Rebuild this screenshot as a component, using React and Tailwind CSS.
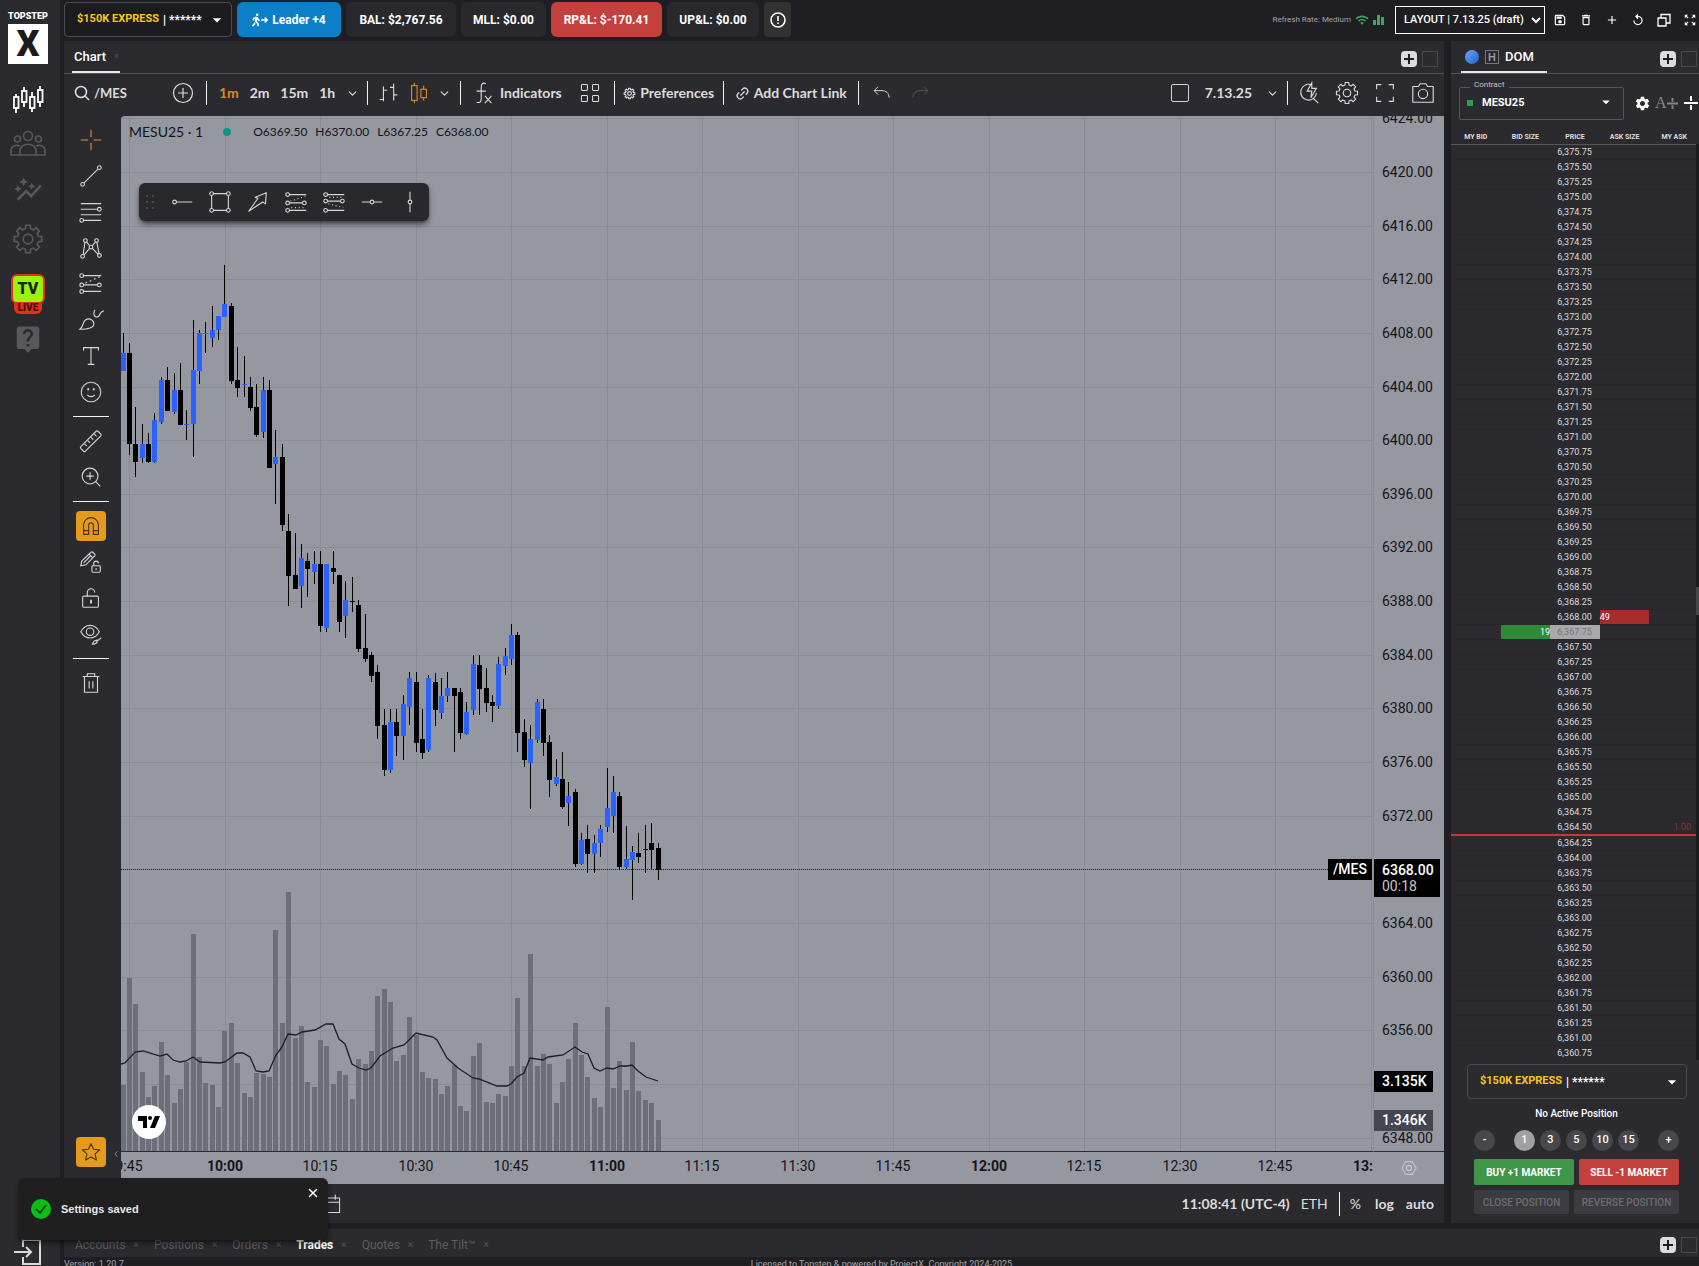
import React, { useState } from 'react';
import { FaPersonWalkingArrowRight } from 'react-icons/fa6';
import { MdAutoGraph, MdLiveHelp, MdSettings, MdWifi, MdOutlineSave, MdDeleteOutline, MdAdd, MdReplay, MdOutlineZoomOutMap, MdArrowDropDown } from 'react-icons/md';
import { ChevronDown, ChevronLeft, Link2, X } from 'lucide-react';

// [high, bodyTop, bodyBottom, low, up, volume], one entry per minute from 9:44
const BARS = [
  [217, 237, 255, 255, 1, 66], [227, 237, 328, 339, 0, 173], [291, 328, 346, 361, 0, 147], [308, 328, 342, 347, 1, 79],
  [317, 328, 346, 347, 0, 54], [297, 304, 346, 347, 1, 65], [261, 264, 306, 308, 1, 109], [251, 264, 295, 295, 0, 76],
  [257, 274, 296, 298, 1, 48], [247, 274, 309, 309, 0, 62], [294, 308, 309, 324, 1, 89], [204, 254, 308, 341, 1, 217],
  [214, 217, 255, 268, 1, 94], [206, 217, 218, 237, 1, 68], [190, 214, 222, 231, 1, 66], [200, 200, 214, 224, 1, 44],
  [149, 188, 201, 201, 1, 120], [187, 190, 265, 268, 0, 128], [231, 264, 272, 281, 0, 88], [240, 268, 269, 281, 1, 58],
  [261, 271, 292, 295, 0, 54], [268, 291, 319, 321, 0, 78], [261, 274, 316, 322, 1, 77], [264, 274, 352, 352, 0, 74],
  [314, 341, 348, 388, 1, 221], [328, 341, 409, 415, 0, 128], [398, 415, 460, 490, 0, 259], [417, 459, 473, 473, 0, 113],
  [428, 442, 470, 492, 1, 125], [437, 445, 453, 481, 0, 69], [435, 448, 456, 468, 1, 64], [435, 448, 510, 516, 0, 111],
  [448, 448, 512, 516, 1, 105], [435, 452, 456, 468, 0, 67], [459, 459, 506, 516, 0, 80], [465, 484, 500, 522, 1, 76],
  [461, 485, 486, 496, 0, 52], [484, 489, 533, 536, 0, 92], [498, 532, 543, 546, 0, 87], [536, 539, 560, 566, 0, 100],
  [549, 556, 610, 623, 0, 155], [593, 609, 654, 660, 0, 162], [593, 606, 654, 657, 1, 149], [593, 606, 620, 640, 0, 90],
  [579, 588, 620, 644, 1, 96], [556, 562, 591, 609, 1, 134], [556, 566, 627, 636, 0, 116], [593, 623, 637, 643, 0, 79],
  [559, 562, 634, 636, 1, 73], [557, 566, 594, 610, 0, 72], [562, 580, 597, 603, 1, 57], [556, 572, 580, 586, 1, 65],
  [572, 572, 580, 636, 0, 86], [572, 576, 617, 623, 0, 45], [586, 596, 618, 619, 1, 40], [539, 548, 594, 599, 1, 95],
  [539, 549, 573, 599, 0, 108], [552, 572, 587, 596, 0, 49], [579, 586, 590, 606, 0, 48], [541, 548, 590, 593, 1, 57],
  [532, 540, 550, 559, 1, 55], [508, 519, 543, 549, 1, 85], [516, 519, 617, 636, 0, 153], [603, 616, 644, 651, 0, 85],
  [609, 623, 647, 693, 1, 197], [583, 586, 624, 627, 1, 85], [583, 593, 627, 640, 0, 97], [619, 626, 664, 681, 0, 87],
  [643, 661, 668, 670, 1, 48], [636, 663, 691, 693, 0, 69], [666, 680, 687, 710, 1, 92], [673, 676, 748, 751, 0, 128],
  [717, 724, 748, 749, 1, 96], [709, 723, 738, 757, 0, 74], [719, 727, 738, 757, 1, 53], [709, 713, 727, 741, 1, 44],
  [652, 692, 711, 716, 1, 144], [660, 676, 700, 717, 1, 63], [676, 680, 751, 754, 0, 90], [710, 743, 751, 753, 1, 61],
  [730, 736, 744, 784, 1, 109], [717, 737, 741, 747, 0, 60], [709, 733, 734, 757, 0, 51], [707, 727, 734, 753, 0, 48],
  [727, 732, 754, 764, 0, 31],
];

const VOLUME_MA =
  '0,948 4,947 14,936 22,935 39,940 46,938 52,944 59,946 65,945 72,941 79,946 99,947 104,946 116,937 122,937 129,941 135,955 142,956 148,955 155,939 161,931 167,918 175,919 181,916 194,914 205,908 212,908 218,923 224,928 231,948 238,952 245,954 250,952 259,940 272,932 283,929 295,917 312,921 316,924 326,942 337,952 352,962 358,963 376,970 386,970 390,968 396,961 403,957 409,942 422,944 427,941 442,939 454,931 461,936 467,938 473,952 479,955 486,952 492,953 499,950 506,950 511,949 517,955 525,961 531,963 537,965';

const TIMES = ['9:45', '10:00', '10:15', '10:30', '10:45', '11:00', '11:15', '11:30', '11:45', '12:00', '12:15', '12:30', '12:45', '13:00'];
const PLOT_H = 1035;
const barX = (i) => 2 + Math.floor(i * 6.369 + 0.05);
const timeX = (i) => Math.round(8 + i * 95.54);
const priceY = (p) => Math.round(56 + (6420 - p) * 13.41);

const GRID_PRICES = Array.from({ length: 20 }, (_, i) => 6424 - i * 4);
const DOM_PRICES = Array.from({ length: 61 }, (_, i) => 6375.75 - i * 0.25);
const fmt = (p) => p.toLocaleString('en-US', { minimumFractionDigits: 2 });

const gearPath = (c, outer, inner, teeth) => {
  const pts = [];
  for (let i = 0; i < teeth; i++) {
    const a = (i / teeth) * Math.PI * 2;
    [[-0.5, inner], [-0.34, outer], [0.34, outer], [0.5, inner]].forEach(([t, r]) => {
      const ang = a + (t * Math.PI * 1.25) / teeth;
      pts.push(`${(c + r * Math.sin(ang)).toFixed(2)},${(c - r * Math.cos(ang)).toFixed(2)}`);
    });
  }
  return `M${pts.join('L')}Z`;
};

const Svg = ({ size = 28, children, className = '', box = 28, w = 1.2 }) => (
  <svg width={size} height={size} viewBox={`0 0 ${box} ${box}`} fill="none" stroke="currentColor" strokeWidth={w} className={`shrink-0 ${className}`} aria-hidden="true">
    {children}
  </svg>
);

const Gear = ({ size, className, w }) => (
  <Svg size={size} className={className} w={w}>
    <path d={gearPath(14, 11.5, 8.8, 8)} strokeLinejoin="round" />
    <circle cx="14" cy="14" r="4" />
  </Svg>
);

const ICONS = {
  cross: <path d="M14 3v8M14 17v8M3 14h8M17 14h8" stroke="#d9932a" />,
  line: <><circle cx="5" cy="23" r="2" /><circle cx="23" cy="5" r="2" /><path d="M6.5 21.5l15-15" /></>,
  fib: <><path d="M3 5h22M3 11h18M3 17h22M6 23h19" /><circle cx="23" cy="11" r="2" /><circle cx="4" cy="23" r="2" /></>,
  pattern: <><circle cx="5" cy="23" r="2" /><circle cx="8" cy="6" r="2" /><circle cx="14" cy="13" r="2" /><circle cx="20" cy="6" r="2" /><circle cx="23" cy="22" r="2" /><path d="M5.5 21l2-13M9.3 7.6l3.2 3.8M15.5 11.4l3.2-3.8M20.4 8l2.2 12M6.5 21.5l6-7M15.5 14.5l6 6" /></>,
  forecast: <><circle cx="4" cy="5" r="2" /><circle cx="4" cy="15" r="2" /><circle cx="23" cy="15" r="2" /><circle cx="4" cy="22" r="2" /><path d="M6 5h19M6 15h15M6 22h19" /><path d="M8 13L24 6" strokeDasharray="2 3" /></>,
  brush: <><path d="M2 24c4-3 3-8 6-10 4-3 9 0 9 4 0 5-6 6-15 6z" /><path d="M17 7c0 4 4 5 6 2 1-3 2-4 5-5M17 7l1-4" /></>,
  text: <path d="M6 8V5h16v3M14 5v18M10.5 23h7" />,
  smile: <><circle cx="14" cy="14" r="10.5" /><path d="M10 17c2 2.6 6 2.6 8 0" /><path d="M10 11h2M16 11h2" strokeWidth="2" /></>,
  ruler: <><path d="M3 20L19.5 3.5a1.5 1.5 0 0 1 2 0l3 3a1.5 1.5 0 0 1 0 2L8 25a1.5 1.5 0 0 1-2 0l-3-3a1.5 1.5 0 0 1 0-2z" /><path d="M7 17l2.5 2.5M10.5 13.500l2.500 2.500M14 10l2.500 2.500M17.500 6.500l2.500 2.500" /></>,
  zoom: <><circle cx="13" cy="13" r="8.5" /><path d="M19 19l5 5M9 13h8M13 9v8" /></>,
  magnet: <><path d="M6 23V13a8 8 0 0 1 16 0v10h-5.500V13a2.500 2.500 0 0 0-5 0v10z" /><path d="M6 19h5.500M16.500 19H22" /></>,
  pencilLock: <><path d="M3 18l1-5L14 3.500a1.500 1.500 0 0 1 2 0l2 2a1.500 1.500 0 0 1 0 2L8.500 17z" /><path d="M12 5.500l4 4M6 15l8-8" /><rect x="15" y="18" width="9" height="7" rx="1" /><path d="M17 18v-2.500a2.500 2.500 0 0 1 5 0M19.500 20.500v2" /></>,
  lock: <><rect x="5" y="12" width="17" height="12" rx="1.500" /><path d="M10 12V8a4 4 0 0 1 8 0" /><path d="M14 16v4" strokeWidth="2" /></>,
  eye: <><path d="M3 11.500c5-9 15-9 20 0-5 9-15 9-20 0z" /><circle cx="13" cy="11.500" r="4" /><path d="M15 25c2-1 1-4 4-4 3 0 2 4-4 4zM20 20c1 2 3 0 5-2" /></>,
  trash: <path d="M5 7h18M10 7V4h8v3M7 7v17h14V7M12 12v8M16 12v8" />,
  hray: <><circle cx="6" cy="14" r="2" /><path d="M8 14h17" /></>,
  rect: <><circle cx="5" cy="5" r="2" /><circle cx="23" cy="5" r="2" /><circle cx="5" cy="23" r="2" /><circle cx="23" cy="23" r="2" /><path d="M7 5h14M7 23h14M5 7v14M23 7v14" /></>,
  arrow: <path d="M4 24l10-14-3-1 12-5-1 12-3-2z" strokeLinejoin="round" />,
  long: <><circle cx="5" cy="6" r="2" /><circle cx="5" cy="23" r="2" /><circle cx="5" cy="15" r="2" /><circle cx="23" cy="15" r="2" /><path d="M7 6h18M7 15h14M7 23h18" /><path d="M8 13l16-5M9 20h14" strokeDasharray="1 3" /></>,
  short: <><circle cx="5" cy="6" r="2" /><circle cx="5" cy="13" r="2" /><circle cx="23" cy="13" r="2" /><circle cx="5" cy="23" r="2" /><path d="M7 6h18M7 13h14M7 23h18" /><path d="M8 16l16 4M9 9h14" strokeDasharray="1 3" /></>,
  hline: <><circle cx="14" cy="14" r="2" /><path d="M3 14h9M16 14h9" /></>,
  vline: <><circle cx="14" cy="14" r="2" /><path d="M14 3v9M14 16v9" /></>,
  star: <path d="M14 5l2.800 6 6.500.700-4.900 4.400 1.400 6.500L14 19.300l-5.800 3.300 1.400-6.500-4.900-4.400 6.500-.700z" strokeLinejoin="round" />,
};

const Tool = ({ name, label, active }) => (
  <button aria-label={label || name} className="flex h-9 w-full items-center justify-center text-[#d5d5d8]">
    <span className={active ? 'flex size-[30px] items-center justify-center rounded bg-[#e59a1b] text-[#4a3210]' : 'flex'}>
      <Svg size={26}>{ICONS[name]}</Svg>
    </span>
  </button>
);

const RailLine = () => <div className="flex h-[13px] items-center justify-center"><div className="h-px w-9 bg-[#f4f4f6]" /></div>;

const Sep = () => <div className="h-6 w-px shrink-0 bg-[#f0f0f0]" />;

const PanelButtons = () => (
  <div className="ml-auto flex items-center gap-[5px]">
    <button aria-label="Add tab" className="flex size-4 items-center justify-center rounded-sm bg-[#dcdcdc] text-[#1f1e23]">
      <Svg size={12} box={12} w={2}><path d="M1 6h10M6 1v10" /></Svg>
    </button>
    <button aria-label="Maximize" className="size-4 border border-[#47474c]" />
  </div>
);

const AccountButton = ({ className }) => (
  <button aria-haspopup="listbox" className={`flex h-[35px] items-center rounded border border-[#4a4a4f] text-[11px] ${className}`}>
    <b className="text-[#f8c51c]">$150K EXPRESS</b>
    <span className="ml-1 text-xs font-bold text-white">| ******</span>
    <MdArrowDropDown size={20} className="ml-auto text-white" />
  </button>
);

const Stat = ({ children, className }) => (
  <div className={`flex h-[35px] items-center justify-center rounded-md text-xs font-bold whitespace-nowrap text-white ${className}`}>{children}</div>
);

function Sidebar() {
  return (
    <aside className="flex w-[60px] shrink-0 flex-col items-center overflow-hidden bg-[#2b2a2f] pr-1">
      <div className="mt-2 text-[9px] leading-4 font-black text-white">TOPSTEP</div>
      <div className="flex size-10 items-center justify-center bg-white text-4xl leading-none font-black text-[#1b1b1d]">X</div>
      <nav className="mt-3.5 flex flex-col items-center text-[#58585c]">
        <button aria-label="Trading" className="flex h-11 items-center text-white">
          <Svg size={32} box={32} w={1.8}>
            <path d="M4 10v3M4 24v5M12 3v4M12 18v5M20 8v5M20 24v4M28 2v4M28 18v5" />
            <rect x="2" y="13" width="4.500" height="11" /><rect x="10" y="7" width="4.500" height="11" /><rect x="18" y="13" width="4.500" height="11" /><rect x="26" y="6" width="4.500" height="12" />
          </Svg>
        </button>
        <button aria-label="Leaderboard" className="flex h-11 items-center">
          <Svg size={36} box={36} w={1.6}>
            <circle cx="18" cy="10" r="4.500" /><circle cx="7.500" cy="13" r="3" /><circle cx="28.500" cy="13" r="3" />
            <path d="M10 29v-4c0-9 16-9 16 0v4zM10 29H1v-4c0-5 5-7 9-5M26 29h9v-4c0-5-5-7-9-5" />
          </Svg>
        </button>
        <button aria-label="Analytics" className="flex h-12 items-center"><MdAutoGraph size={30} /></button>
        <button aria-label="Settings" className="flex h-[50px] items-center"><Gear size={34} w={1.4} /></button>
        <button aria-label="TV Live" className="mt-2.5 flex h-[42px] flex-col items-center">
          <span className="flex h-[30px] w-[34px] items-center justify-center rounded-md border-2 border-[#e0301e] bg-[#9bf20c] text-base font-black text-[#14250a]">TV</span>
          <span className="-mt-0.5 rounded-b-md bg-[#e0301e] px-1 text-[10px] leading-3 font-black text-[#470d08]">LIVE</span>
        </button>
        <button aria-label="Help" className="flex h-[46px] items-center"><MdLiveHelp size={30} /></button>
      </nav>
      <button aria-label="Log out" className="mt-auto flex text-[#dadada]">
        <Svg size={28} w={2}><path d="M9 9V2h17v24H9v-7M0 14h17M12 9l5 5-5 5" /></Svg>
      </button>
    </aside>
  );
}

function TopBar() {
  return (
    <header className="flex h-[41px] shrink-0 items-center pb-0.5">
      <div className="flex gap-[5px]">
        <AccountButton className="w-[168px] bg-[#1c1b20] pr-1 pl-3" />
        <button className="flex h-[35px] w-[104px] items-center justify-center gap-1 rounded-md bg-[#0d7fc6] text-xs font-bold text-white">
          <FaPersonWalkingArrowRight size={16} />Leader +4
        </button>
        <Stat className="w-[110px] bg-[#29282d]">BAL: $2,767.56</Stat>
        <Stat className="w-[85px] bg-[#29282d]">MLL: $0.00</Stat>
        <Stat className="w-[111px] bg-[#c4403c]">RP&amp;L: $-170.41</Stat>
        <Stat className="w-[92px] bg-[#29282d]">UP&amp;L: $0.00</Stat>
        <button aria-label="Info" className="flex h-[35px] w-[27px] items-center justify-center rounded bg-[#323232] text-white">
          <Svg size={16} box={16} w={1.6}><circle cx="8" cy="8" r="7" /><path d="M8 4v5M8 10.500v1.500" /></Svg>
        </button>
      </div>
      <div className="ml-auto flex items-center text-white">
        <span className="text-[8px] text-[#a5a5a8]">Refresh Rate: Medium</span>
        <MdWifi size={14} className="ml-1 text-[#3fa65a]" />
        <svg width="12" height="10" className="mr-2.5 ml-1 fill-[#3fa65a]" aria-hidden="true"><path d="M0 5h3v5H0zM4 0h3v10H4zM8 2h3v8H8z" /></svg>
        <select aria-label="Layout" className="h-7 w-[150px] border border-white bg-[#1f1e23] pl-1 text-[11px] font-medium text-white">
          <option>LAYOUT | 7.13.25 (draft)</option>
        </select>
        <div className="ml-2 flex gap-3 pr-0.5">
          <button aria-label="Save"><MdOutlineSave size={14} /></button>
          <button aria-label="Delete"><MdDeleteOutline size={14} /></button>
          <button aria-label="New"><MdAdd size={14} /></button>
          <button aria-label="Reset"><MdReplay size={14} /></button>
          <button aria-label="Duplicate"><Svg size={14} box={14} w={1.3}><path d="M1 5h8v8H1zM4 5V1.500h9V10H9" /></Svg></button>
          <button aria-label="Fullscreen"><MdOutlineZoomOutMap size={14} /></button>
        </div>
      </div>
    </header>
  );
}

function ChartToolbar() {
  const [tf, setTf] = useState('1m');
  return (
    <div className="flex h-[42px] shrink-0 items-center pb-1 font-['Lato',sans-serif] text-sm font-bold text-[#dcdcde]">
      <button className="flex w-[108px] items-center gap-1 pl-2.5 text-[13px]">
        <Svg size={16} box={16} w={1.6}><circle cx="7" cy="7" r="5.500" /><path d="M11 11l4 4" /></Svg>/MES
      </button>
      <button aria-label="Compare" className="mr-3"><Svg size={22} box={22}><circle cx="11" cy="11" r="9.500" /><path d="M11 6v10M6 11h10" /></Svg></button>
      <Sep />
      <div className="ml-3 flex w-[140px] items-center justify-between">
        {['1m', '2m', '15m', '1h'].map((t) => (
          <button key={t} onClick={() => setTf(t)} className={tf === t ? 'text-[#d98a1f]' : ''}>{t}</button>
        ))}
        <ChevronDown size={13} />
      </div>
      <div className="ml-2"><Sep /></div>
      <div className="flex w-[92px] items-center gap-1 pl-2">
        <button aria-label="Bars"><Svg size={26}><path d="M8 7v16M8 21H4M8 11h4M19 4v18M19 8h-4M19 16h4" /></Svg></button>
        <button aria-label="Candles"><Svg size={26} className="text-[#d98a1f]"><path d="M9 3v3M9 22v3M19 6v4M19 19v3" /><rect x="6" y="6" width="6" height="16" /><rect x="16" y="10" width="6" height="9" /></Svg></button>
        <ChevronDown size={13} className="ml-0.5" />
      </div>
      <Sep />
      <button className="ml-2.5 flex items-center gap-[3px]">
        <Svg size={26}><path d="M16 4c-4-2-5 1-5 4v12c0 3-1 5-5 4M6 12h10M15 17l7 8M22 17l-7 8" /></Svg>Indicators
      </button>
      <button aria-label="Templates" className="mr-3 ml-4">
        <Svg size={24}><rect x="4" y="4" width="7" height="7" rx="1" /><rect x="17" y="4" width="7" height="7" rx="1" /><rect x="4" y="17" width="7" height="7" rx="1" /><rect x="17" y="17" width="7" height="7" rx="1" /></Svg>
      </button>
      <Sep />
      <button className="flex w-[108px] items-center justify-center gap-1 whitespace-nowrap"><Gear size={13} w={2.6} />Preferences</button>
      <Sep />
      <button className="flex w-[134px] items-center justify-center gap-1 whitespace-nowrap"><Link2 size={15} className="-rotate-45" />Add Chart Link</button>
      <Sep />
      <button aria-label="Undo" className="ml-3"><Svg size={22}><path d="M9 6L4 11l5 5M4 11h10c5 0 9 3 9 9" /></Svg></button>
      <button aria-label="Redo" className="ml-4 text-[#55555a]"><Svg size={22}><path d="M19 6l5 5-5 5M24 11H14c-5 0-9 3-9 9" /></Svg></button>

      <div className="ml-auto flex items-center pr-2">
        <input type="checkbox" aria-label="Sync layout" className="size-[18px] appearance-none rounded-xs border border-[#d5d5d8]" />
        <button className="ml-4 flex items-center gap-3.5">7.13.25<ChevronDown size={13} /></button>
        <div className="mx-2"><Sep /></div>
        <div className="flex items-center gap-3">
          <button aria-label="Quick search"><Svg size={26}><path d="M16 5a8.500 8.500 0 1 0 6 9M19 20l5 5" /><path d="M17 3l-5 9h5l-1 7 6-10h-5z" /></Svg></button>
          <button aria-label="Chart settings"><Gear size={26} /></button>
          <button aria-label="Fullscreen"><Svg size={26}><path d="M5 10V5h5M18 5h5v5M23 18v5h-5M10 23H5v-5" /></Svg></button>
          <button aria-label="Snapshot"><Svg size={26}><path d="M3 7h6l2-3h6l2 3h6v17H3z" strokeLinejoin="round" /><circle cx="14" cy="15" r="5" /></Svg></button>
        </div>
      </div>
    </div>
  );
}

function Plot() {
  return (
    <svg className="block h-full w-full" aria-label="MESU25 one minute chart">
      {GRID_PRICES.map((p) => <line key={p} x1="0" x2="100%" y1={priceY(p) + 0.5} y2={priceY(p) + 0.5} stroke="#898c94" />)}
      {TIMES.map((t, i) => <line key={t} x1={timeX(i) + 0.5} x2={timeX(i) + 0.5} y1="0" y2="100%" stroke="#898c94" />)}
      {BARS.map((b, i) => <rect key={i} x={barX(i) - 2} y={PLOT_H - b[5]} width="5" height={b[5]} fill="#6c6f7a" />)}
      <polyline points={VOLUME_MA} fill="none" stroke="#1d1e24" strokeWidth="1.300" />
      <line x1="0" x2="100%" y1="753.5" y2="753.5" stroke="#222" strokeDasharray="1 1" />
      {BARS.map(([h, t, b, l, up], i) => (
        <g key={i}>
          <rect x={barX(i)} y={h} width="1" height={l - h} fill="#000" />
          <rect x={barX(i) - 2} y={t} width="5" height={b - t} fill={up ? '#2962ff' : '#000'} />
        </g>
      ))}
    </svg>
  );
}

function Chart() {
  return (
    <div className="grid min-w-0 flex-1 grid-cols-[1fr_71px] grid-rows-[1fr_32px] overflow-hidden rounded-tl bg-[#9598a1] text-sm">
      <div className="relative overflow-hidden border-b border-[#2c2d33]">
        <Plot />
        <div className="absolute top-1.5 left-2 flex items-center font-['Lato',sans-serif] text-[#131418]">
          <span className="text-sm leading-5">MESU25 · 1</span>
          <i className="mr-[22px] ml-5 size-2 rounded-full bg-[#089981]" />
          <span className="flex gap-2 text-xs leading-5">
            <span>O6369.50</span><span>H6370.00</span><span>L6367.25</span><span>C6368.00</span>
          </span>
        </div>
        <div className="absolute top-[67px] left-[18px] flex h-[38px] w-[290px] items-center justify-between rounded-md bg-[#29282d] px-1.5 text-[#d5d5d8] shadow-md shadow-black/50">
          <svg width="12" height="16" className="fill-[#47474c]" aria-hidden="true">
            {[1, 7].map((x) => [1, 7, 13].map((y) => <rect key={`${x}-${y}`} x={x} y={y} width="2" height="2" />))}
          </svg>
          {['hray', 'rect', 'arrow', 'long', 'short', 'hline', 'vline'].map((n) => (
            <button key={n} aria-label={n}><Svg size={26}>{ICONS[n]}</Svg></button>
          ))}
        </div>
        <a href="#tradingview" aria-label="TradingView" className="absolute bottom-3 left-[11px] flex size-[34px] items-center justify-center rounded-full bg-white">
          <svg width="22" height="12" viewBox="0 0 22 12" className="fill-black" aria-hidden="true"><path d="M0 0h9v12H5V5H0z" /><circle cx="12" cy="2" r="2" /><path d="M17 0h5l-5 12h-5z" /></svg>
        </a>
        <span className="absolute top-[743px] right-px bg-black px-[5px] leading-[21px] font-medium text-white">/MES</span>
      </div>
      <div className="relative overflow-hidden border-b border-l border-b-[#2c2d33] border-l-[#8b8e97]">
        <svg className="block h-full w-full font-['Roboto',sans-serif]" fill="#131418" fontSize="14" aria-label="Price scale">
          {GRID_PRICES.filter((p) => p !== 6368 && p !== 6352).map((p) => <text key={p} x="8" y={priceY(p) + 5}>{p.toFixed(2)}</text>)}
        </svg>
        <div className="absolute top-[743px] left-0 bg-black py-[3px] pr-1.5 pl-2 leading-4 font-medium text-white">6368.00<br /><span className="font-normal text-[#c8c8c8]">00:18</span></div>
        <div className="absolute top-[955px] left-0 w-[59px] bg-black pl-2 leading-[21px] font-medium text-white">3.135K</div>
        <div className="absolute top-[994px] left-0 w-[59px] bg-[#434651] pl-2 leading-[21px] font-medium text-white">1.346K</div>
      </div>
      <svg className="h-full w-full font-['Roboto',sans-serif]" fill="#131418" fontSize="14" textAnchor="middle" aria-label="Time scale">
        {TIMES.map((t, i) => <text key={t} x={timeX(i)} y="19" fontWeight={i > 0 && t.endsWith(':00') ? 700 : 400}>{t}</text>)}
      </svg>
      <button aria-label="Scale settings" className="flex items-center justify-center text-[#c3c5ca]">
        <Svg size={18} w={1.8}><path d="M9 4h10l6 10-6 10H9L3 14z" /><circle cx="14" cy="14" r="4" /></Svg>
      </button>
    </div>
  );
}

function ChartPanel() {
  return (
    <section className="flex min-w-0 flex-1 flex-col bg-[#2b2a2f]">
      <div className="flex h-[33px] shrink-0 items-end border-b border-[#55555a] pr-1.5 pl-2">
        <button className="flex h-[30px] w-12 items-center gap-2 border-b-2 border-[#ece6f0] px-0.5 text-[13px] font-medium text-white">Chart<span className="text-[9px] text-[#4a4a4f]">×</span></button>
        <div className="ml-auto pb-1.5"><PanelButtons /></div>
      </div>
      <ChartToolbar />
      <div className="flex min-h-0 flex-1">
        <div className="flex w-[57px] shrink-0 flex-col pt-1.5">
          <div className="pr-1">
            <Tool name="cross" /><Tool name="line" /><Tool name="fib" /><Tool name="pattern" /><Tool name="forecast" /><Tool name="brush" /><Tool name="text" /><Tool name="smile" />
            <RailLine />
            <Tool name="ruler" /><Tool name="zoom" />
            <RailLine />
            <Tool name="magnet" active /><Tool name="pencilLock" /><Tool name="lock" /><Tool name="eye" />
            <RailLine />
            <Tool name="trash" />
          </div>
          <div className="relative mt-auto pr-1 pb-3.5">
            <Tool name="star" label="favorites" active />
            <ChevronLeft size={10} className="absolute top-[15px] right-0 text-[#a0a0a4]" />
          </div>
        </div>
        <Chart />
      </div>
      <div className="flex h-[39px] shrink-0 items-center pr-2.5 font-['Lato',sans-serif] text-sm text-[#dcdcde]">
        <button aria-label="Go to date" className="ml-[255px]"><Svg size={24}><path d="M4 7h20v17H4zM4 12h20M19 3v6M9 3v6" /></Svg></button>
        <button className="ml-auto font-bold">11:08:41 (UTC-4)</button>
        <button className="mx-[11px]">ETH</button>
        <Sep />
        <button className="mr-3.5 ml-2.5">%</button>
        <button className="mr-3 font-bold">log</button>
        <button className="font-bold">auto</button>
      </div>
    </section>
  );
}

function DomRow({ price }) {
  const last = price === 6367.75;
  const line = price === 6364.5;
  return (
    <tr className={line ? 'h-[15px] border-b-2 border-[#c23b37]' : 'h-[15px] border-b border-[#28272c]'}>
      <td />
      <td className={last ? 'bg-[#2f8a3a] text-right text-white' : ''}>{last ? '19' : ''}</td>
      <td className={last ? 'bg-[#a9a9a9] pr-2 text-right text-[#75757a]' : 'pr-2 text-right text-[#dededf]'}>{fmt(price)}</td>
      <td className={price === 6368 ? 'bg-[#a52c2c] text-white' : ''}>{price === 6368 ? '49' : ''}</td>
      <td className="pr-2 text-right text-[#8e3236]">{line ? '1.00' : ''}</td>
    </tr>
  );
}

function DomPanel() {
  const [qty, setQty] = useState(1);
  return (
    <section className="flex w-[248px] shrink-0 flex-col overflow-hidden bg-[#2b2a2f] text-white">
      <div className="flex h-[33px] shrink-0 items-end border-b border-[#55555a] pr-0.5 pl-2.5">
        <button className="flex h-[30px] w-[86px] items-center gap-1.5 border-b-2 border-[#ece6f0] pl-1 text-[13px] font-medium">
          <i className="size-3.5 rounded-full bg-linear-to-br from-[#6fa8f5] to-[#1d5fd0]" />
          <i className="flex size-3.5 items-center justify-center border border-[#77777b] text-[11px] leading-none not-italic text-[#a0a0a4]">H</i>
          DOM
        </button>
        <div className="ml-auto pb-1.5"><PanelButtons /></div>
      </div>
      <div className="flex h-[58px] shrink-0 items-center pl-2">
        <div className="relative h-[33px] w-[165px] shrink-0 rounded-xs border border-[#55555a]">
          <label htmlFor="contract" className="absolute -top-[11px] left-2.5 bg-[#2b2a2f] px-1 text-[8px] leading-4 text-[#c5c5c8]">Contract</label>
          <i className="absolute top-3 left-[7px] size-1.5 bg-[#2f9a4b]" />
          <select id="contract" className="h-full w-full appearance-none bg-transparent pl-[22px] text-[11px] font-bold text-white"><option>MESU25</option></select>
          <MdArrowDropDown size={18} className="pointer-events-none absolute top-[5px] right-2" />
        </div>
        <button aria-label="DOM settings" className="ml-2.5"><MdSettings size={17} /></button>
        <button aria-label="Font size" className="ml-1 flex items-center font-['Liberation_Serif',serif] text-base text-[#88888c]">A<Svg size={11} box={12} w={2}><path d="M0 6h12M6 0v4M6 8v4" /></Svg></button>
        <button aria-label="Center" className="ml-1.5"><Svg size={14} box={14} w={2}><path d="M0 7h14M7 0v5M7 9v5" /></Svg></button>
      </div>
      <div className="relative min-h-0 flex-1 overflow-hidden">
        <table className="w-full table-fixed border-collapse text-[9px] leading-[14px] [&_td]:py-0">
          <thead>
            <tr className="h-3 border-b border-[#55555a] text-[7px] leading-[11px] text-[#dededf]">
              {['MY BID', 'BID SIZE', 'PRICE', 'ASK SIZE', 'MY ASK'].map((h) => <th key={h}>{h}</th>)}
            </tr>
          </thead>
          <tbody>{DOM_PRICES.map((p) => <DomRow key={p} price={p} />)}</tbody>
        </table>
        <div className="absolute top-3 right-0 bottom-0 w-[3px] bg-[#1b1b1d]"><div className="mt-[443px] h-7 bg-[#47474a]" /></div>
      </div>
      <div className="flex shrink-0 flex-col pt-1 pr-5 pb-[9px] pl-[23px]">
        <AccountButton className="-mr-2 -ml-[7px] pr-1 pl-3" />
        <div className="mt-2 text-center text-[10px] leading-[14px] font-medium">No Active Position</div>
        <div className="mt-2 flex h-[22px] items-center justify-between text-[11px] font-medium">
          <button className="size-[21px] rounded-full bg-[#48474c]">-</button>
          <div className="flex gap-[5px]">
            {[1, 3, 5, 10, 15].map((n) => (
              <button key={n} onClick={() => setQty(n)} className={`size-[21px] rounded-full ${qty === n ? 'bg-[#a0a0a2]' : 'bg-[#48474c]'}`}>{n}</button>
            ))}
          </div>
          <button className="size-[21px] rounded-full bg-[#48474c]">+</button>
        </div>
        <div className="mt-2 grid grid-cols-2 gap-[5px] text-[10px] font-bold">
          <button className="h-[26px] rounded-xs bg-[#3f9648]">BUY +1 MARKET</button>
          <button className="h-[26px] rounded-xs bg-[#c4403c]">SELL -1 MARKET</button>
        </div>
        <div className="mt-[5px] flex gap-[5px] text-[10px] font-medium text-[#6d6d71]">
          <button disabled className="h-6 w-[95px] rounded-xs bg-[#3c3b40]">CLOSE POSITION</button>
          <button disabled className="h-6 flex-1 rounded-xs bg-[#3c3b40] whitespace-nowrap">REVERSE POSITION</button>
        </div>
      </div>
    </section>
  );
}

const TABS = ['Accounts', 'Positions', 'Orders', 'Trades', 'Quotes', 'The Tilt™'];

export default function App() {
  const [toast, setToast] = useState(true);
  return (
    <div className="relative flex h-screen overflow-hidden bg-[#1f1e23] font-['Roboto',sans-serif]">
      <Sidebar />
      <div className="flex min-w-0 flex-1 flex-col pl-1">
        <TopBar />
        <main className="flex min-h-0 flex-1 gap-[7px]">
          <ChartPanel />
          <DomPanel />
        </main>
        <div className="mt-1.5 flex h-7 shrink-0 items-center bg-[#2b2a2f] pt-1 pr-0.5 pl-[11px]">
          <div className="flex gap-[15px] text-xs text-[#5d5d62]">
            {TABS.map((t) => (
              <button key={t} className={t === 'Trades' ? 'flex items-center gap-2 font-bold text-white' : 'flex items-center gap-2'}>
                {t}<span className="text-[10px] font-normal text-[#55555a]">×</span>
              </button>
            ))}
          </div>
          <PanelButtons />
        </div>
        <footer className="relative h-[9px] shrink-0 overflow-hidden text-[9px] leading-[14px] text-[#a5a5a8]">
          <div className="text-center">Licensed to Topstep &amp; powered by ProjectX. Copyright 2024-2025</div>
          <div className="absolute top-0 left-0">Version: 1.20.7</div>
        </footer>
      </div>
      {toast && (
        <div role="status" className="absolute bottom-[26px] left-[18px] flex h-[62px] w-[310px] items-center rounded-md bg-[#1f1f20] pl-[13px] shadow-md shadow-black/40">
          <svg width="20" height="20" aria-hidden="true"><circle cx="10" cy="10" r="10" fill="#0bbf12" /><path d="M5 10l4 4 6-8" fill="none" stroke="#123c14" strokeWidth="1.800" /></svg>
          <span className="ml-2.5 font-['Liberation_Sans',sans-serif] text-[11px] font-bold text-[#e8e8e8]">Settings saved</span>
          <button aria-label="Close" onClick={() => setToast(false)} className="absolute top-2 right-2 text-white"><X size={14} strokeWidth={2.5} /></button>
        </div>
      )}
    </div>
  );
}
